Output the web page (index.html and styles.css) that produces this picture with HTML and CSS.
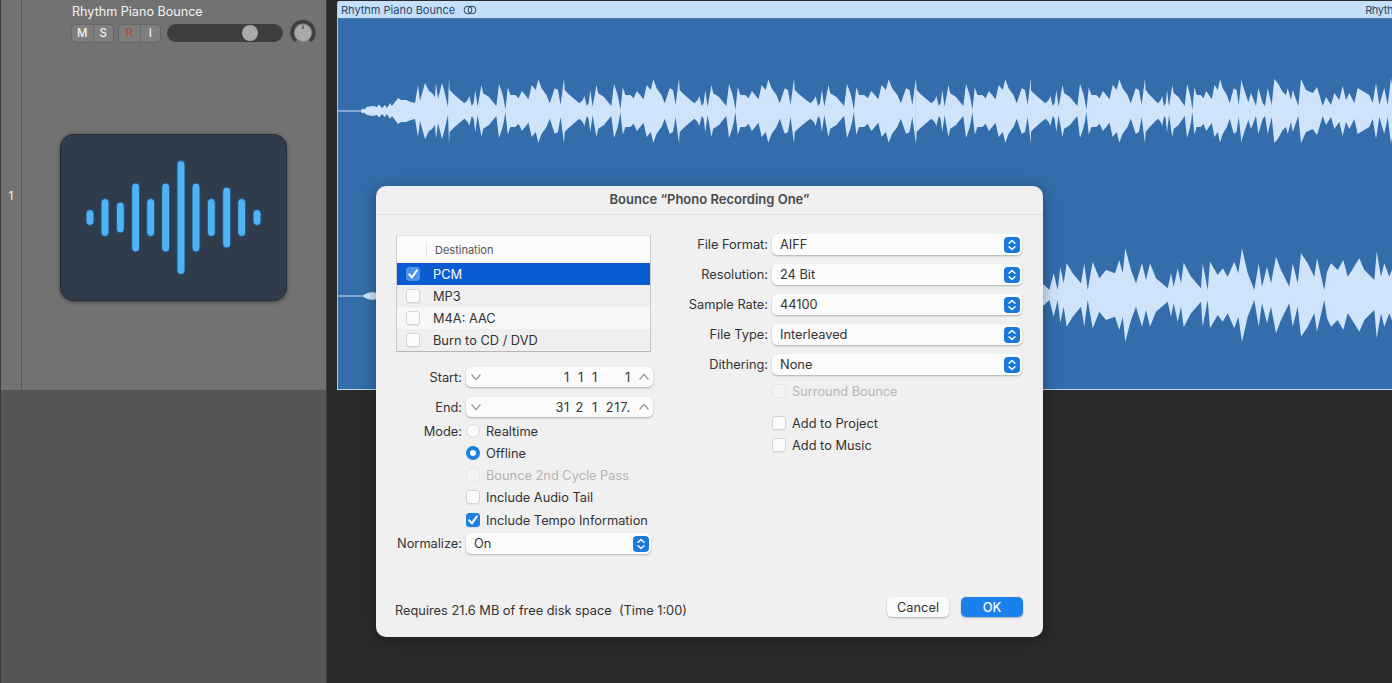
FILE: index.html
```html
<!DOCTYPE html>
<html lang="en">
<head>
<meta charset="utf-8">
<title>Bounce</title>
<link rel="stylesheet" href="styles.css">
</head>
<body>
<svg class="defs" width="0" height="0" aria-hidden="true">
  <defs>
    <g id="period">
      <path id="half" d="M0,0 L0,-32.7 L.7,-21 L4,-17.5 L8,-14 L12,-10.5 L15.5,-7.7 L18.7,-11 L20.4,-15 L22.7,-5 L24.6,-7.7 L26.3,-21 L28.6,-4.3 L32.5,-26 L34.2,-17.7 L37,-16 L40,-14 L44,-9 L47.3,-5 L50,-27 L53.2,-17.7 L55,-10 L56.4,-1 L58.8,-23.7 L61.4,-16 L66.3,-16 L69.6,-12.7 L72.9,-20 L76.2,-16 L79.5,-11.7 L82.7,-26 L86.7,-21 L89.3,-31.7 L92.6,-22.7 L97.5,-16 L100.8,-7.7 L102.4,-12.7 L105.7,-22.7 L109,-21 L111.6,-6 L115,-32.7 L115,0 Z"/>
      <use href="#half" transform="scale(1,-1)"/>
    </g>
    <g id="tail">
      <path id="tail-half" d="M0,0 L0,-31 L7.3,-9 L10,-18 L15,-5 L17.3,-23 L21.7,-8 L24,-5 L26.7,-23 L30.7,-6 L33.3,-32 L36.7,-28 L41.7,-19 L45,-16 L46.7,-23 L50,-11 L51.7,-21 L57.3,-5 L60,-32 L65,-21 L71.7,-18 L76,-24 L81.7,-5 L85,-14 L90,-6 L93.3,-18 L98.3,-11 L101.7,-25 L105,-11 L108.3,-18 L113.3,-8 L116.7,-23 L123.3,-19 L128.3,-16 L131.7,-8 L135,-28 L138.3,-6 L143.3,-23 L146.7,-6 L150,-33 L152,-20 L152,0 Z"/>
      <use href="#tail-half" transform="scale(1,-1)"/>
    </g>
    <g id="lower">
      <path id="lower-half" d="M10,0 L10,-12 L13.3,-10 L18.3,-5 L22.7,-21.7 L26.7,-5 L29.3,-27.7 L32.7,-11.7 L35.7,-31.7 L41.7,-21.7 L50,-11.7 L53.3,-31.7 L56.7,-5 L61.7,-33.3 L68.3,-16.7 L75,-25 L80,-23.3 L84,-21.7 L88.3,-35 L91.7,-21.7 L94.3,-46.7 L100,-25 L105,-11.7 L111,-31.7 L115,-15 L119,-31.7 L125,-16.7 L136.7,-6.7 L140,-21.7 L142.7,-8.3 L146.7,-26.7 L150,-11.7 L152.7,-32.3 L160,-18.3 L170,-6.7 L171.7,-31.7 L176.7,-5 L179,-33.3 L186.7,-20 L191.7,-26.7 L196.7,-18.3 L203.3,-33.3 L207.3,-21.7 L211,-46.7 L216.7,-21.7 L223.3,-5 L227.7,-31.7 L231,-8.3 L236,-28.3 L240,-11.7 L245,-38.3 L250,-25 L258.3,-8.3 L261.7,-31.7 L266.7,-11.7 L270,-41.7 L276.7,-31.7 L283.3,-18.3 L286,-36.7 L293.3,-5 L296,-23.3 L300,-31.7 L306.7,-25 L312.3,-35 L316.7,-18.3 L320,-23.3 L328.3,-36.7 L333.3,-25 L343.3,-15 L345.7,-43.3 L350,-18.3 L353.3,-31.7 L358.3,-18.3 L362,-28.3 L362,0 Z"/>
      <use href="#lower-half" transform="scale(1,-1)"/>
    </g>
    <symbol id="updown" viewBox="0 0 16 16">
      <path d="M5 6.2 8 3.4l3 2.8M5 9.8l3 2.8 3-2.8" fill="none" stroke="#fff" stroke-width="1.4" stroke-linecap="round" stroke-linejoin="round"/>
    </symbol>
    <symbol id="tick" viewBox="0 0 14 14">
      <path d="M3.2 7.4 5.9 10.4 10.9 3.4" fill="none" stroke="#fff" stroke-width="2" stroke-linecap="round" stroke-linejoin="round"/>
    </symbol>
    <symbol id="chev-down" viewBox="0 0 12 8">
      <path d="M1.5 1.5 6 6.5l4.500-5" fill="none" stroke="#9a9a9a" stroke-width="1.2"/>
    </symbol>
    <symbol id="chev-up" viewBox="0 0 12 8">
      <path d="M1.5 6.5 6 1.5l4.500 5" fill="none" stroke="#9a9a9a" stroke-width="1.2"/>
    </symbol>
  </defs>
</svg>

<div class="app">
  <div class="top">
    <aside class="header">
      <div class="track-num">1</div>
      <div class="track">
        <div class="track-name">Rhythm Piano Bounce</div>
        <div class="track-controls">
          <div class="btn-group"><span class="tbtn">M</span><span class="tbtn">S</span></div>
          <div class="btn-group"><span class="tbtn rec">R</span><span class="tbtn">I</span></div>
          <div class="fader"><span class="fader-thumb"></span></div>
          <svg class="knob" width="26" height="26" viewBox="0 0 26 26">
            <path d="M6 21a11 11 0 1 1 14 0" fill="none" stroke="#3f3f3f" stroke-width="3.4"/>
            <circle cx="13" cy="13" r="8.4" fill="#a9a9a9"/>
            <path d="M13 5.5v3.5" stroke="#444" stroke-width="1.2"/>
          </svg>
        </div>
        <svg class="logo" width="227" height="167" viewBox="0 0 227 167">
          <rect x=".5" y=".5" width="226" height="166" rx="13" fill="#303b4b" stroke="#262c36"/>
          <g fill="#4fb3f3" stroke="#1d4f7c" stroke-width="1">
            <rect x="26" y="75.5" width="8" height="16" rx="4"/>
            <rect x="41" y="64.5" width="8" height="38" rx="4"/>
            <rect x="56.300" y="68" width="8" height="31" rx="4"/>
            <rect x="71.700" y="49" width="8" height="69" rx="4"/>
            <rect x="86.700" y="64.5" width="8" height="38" rx="4"/>
            <rect x="101.700" y="49" width="8" height="69" rx="4"/>
            <rect x="117" y="26.500" width="8" height="114" rx="4"/>
            <rect x="132" y="49" width="8" height="69" rx="4"/>
            <rect x="147.300" y="64.5" width="8" height="38" rx="4"/>
            <rect x="162.700" y="53" width="8" height="61" rx="4"/>
            <rect x="177.700" y="64.5" width="8" height="38" rx="4"/>
            <rect x="193" y="75.5" width="8" height="16" rx="4"/>
          </g>
        </svg>
      </div>
    </aside>

    <section class="region">
      <div class="region-title">
        <span>Rhythm Piano Bounce</span>
        <svg class="loop" width="14" height="10" viewBox="0 0 14 10">
          <circle cx="5" cy="5" r="3.900" fill="none" stroke="#24466b" stroke-width="1"/>
          <circle cx="9" cy="5" r="3.900" fill="none" stroke="#24466b" stroke-width="1"/>
        </svg>
        <span class="region-title-next">Rhyth</span>
      </div>
      <svg class="wave" width="1055" height="370" viewBox="337 19 1055 370" fill="#cfe4fb">
        <path d="M337,110.400 L360,110.400 L361.500,108.500 L363,109.500 L366,107 L372,106 L376,107 L378,104.500 L381,108 L384,105 L386,108 L389,103 L391,106 L394,102 L397,98 L400,100 L405,100 L410,102 L414,103 L417,85 L419,101 L424,83 L428,91 L431,93 L434,97 L435,83 L437,99 L441,83 L443,90 L447,107 L448,78 L448,144 L447,115 L443,132 L441,139 L437,123 L435,139 L434,125 L431,129 L428,131 L424,139 L419,121 L417,137 L414,119 L410,120 L405,122 L400,122 L397,124 L394,120 L391,116 L389,119 L386,114 L384,117 L381,114 L378,117.500 L376,115 L372,116 L366,115 L363,112.500 L361.500,113.500 L360,111.600 L337,111.600 Z"/>
        <use href="#period" transform="translate(448,111)"/>
        <use href="#period" transform="translate(563,111)"/>
        <use href="#period" transform="translate(678,111)"/>
        <use href="#period" transform="translate(793,111) scale(1.06,1)"/>
        <use href="#period" transform="translate(915,111)"/>
        <use href="#period" transform="translate(1029,111)"/>
        <use href="#period" transform="translate(1144,111) scale(.84,1)"/>
        <use href="#tail" transform="translate(1240,111)"/>
        <path d="M337,295.400 L362,295.400 L366,293 L372,292 L376,293 L376,299 L372,300 L366,299 L362,296.600 L337,296.600 Z"/>
        <use href="#lower" transform="translate(1030,295)"/>
      </svg>
    </section>
  </div>

  <div class="bottom">
    <div class="bottom-left"></div>
    <div class="bottom-right"></div>
  </div>

  <div class="dialog">
    <h1 class="dialog-title">Bounce “Phono Recording One”</h1>
    <div class="dialog-body">
      <div class="col-left">
        <div class="dest">
          <div class="dest-head"><span class="dest-head-check"></span><span>Destination</span></div>
          <div class="dest-row selected"><span class="box on"><svg width="14" height="14"><use href="#tick"/></svg></span>PCM</div>
          <div class="dest-row alt"><span class="box"></span>MP3</div>
          <div class="dest-row"><span class="box"></span>M4A: AAC</div>
          <div class="dest-row alt"><span class="box"></span>Burn to CD / DVD</div>
        </div>
        <div class="form">
          <label class="lbl">Start:</label>
          <div class="locator">
            <svg width="12" height="8"><use href="#chev-down"/></svg>
            <div class="loc-values"><span class="v1">1</span><span class="v2">1</span><span class="v3">1</span><span class="v4">1</span></div>
            <svg width="12" height="8"><use href="#chev-up"/></svg>
          </div>
          <label class="lbl lbl-end">End:</label>
          <div class="locator loc-end">
            <svg width="12" height="8"><use href="#chev-down"/></svg>
            <div class="loc-values"><span class="v1">31</span><span class="v2">2</span><span class="v3">1</span><span class="v4">217.</span></div>
            <svg width="12" height="8"><use href="#chev-up"/></svg>
          </div>
          <label class="lbl lbl-mode">Mode:</label>
          <div class="opt opt-mode"><span class="radio"></span>Realtime</div>
          <div class="opt col2"><span class="radio on"></span>Offline</div>
          <div class="opt col2 off"><span class="box dim"></span>Bounce 2nd Cycle Pass</div>
          <div class="opt col2"><span class="box"></span>Include Audio Tail</div>
          <div class="opt col2 opt-tempo"><span class="box on"><svg width="14" height="14"><use href="#tick"/></svg></span>Include Tempo Information</div>
          <label class="lbl">Normalize:</label>
          <div class="select sel-narrow">On<svg class="stepper" width="16" height="16"><use href="#updown"/></svg></div>
        </div>
      </div>
      <div class="col-right">
        <div class="rform">
          <label class="lbl">File Format:</label>
          <div class="select">AIFF<svg class="stepper" width="16" height="16"><use href="#updown"/></svg></div>
          <label class="lbl">Resolution:</label>
          <div class="select">24 Bit<svg class="stepper" width="16" height="16"><use href="#updown"/></svg></div>
          <label class="lbl">Sample Rate:</label>
          <div class="select">44100<svg class="stepper" width="16" height="16"><use href="#updown"/></svg></div>
          <label class="lbl">File Type:</label>
          <div class="select">Interleaved<svg class="stepper" width="16" height="16"><use href="#updown"/></svg></div>
          <label class="lbl">Dithering:</label>
          <div class="select">None<svg class="stepper" width="16" height="16"><use href="#updown"/></svg></div>
        </div>
        <div class="extras">
          <div class="opt off"><span class="box dim"></span>Surround Bounce</div>
          <div class="opt opt-project"><span class="box"></span>Add to Project</div>
          <div class="opt"><span class="box"></span>Add to Music</div>
        </div>
      </div>
    </div>
    <div class="dialog-foot">
      <span class="req">Requires 21.6 MB of free disk space&nbsp; (Time 1:00)</span>
      <button class="btn">Cancel</button>
      <button class="btn primary">OK</button>
    </div>
  </div>
</div>
</body>
</html>
```

FILE: styles.css
```css
* { box-sizing: border-box; }
html, body { margin: 0; padding: 0; }
body {
  width: 1392px;
  height: 683px;
  overflow: hidden;
  background: #2a2a2a;
  font-family: Inter, "Liberation Sans", sans-serif;
  font-size: 12.8px;
  color: #333;
}
.defs { display: block; height: 0; }
.app { position: relative; width: 1392px; height: 683px; display: flex; flex-direction: column; }

.top { height: 390px; display: flex; }
.header {
  width: 327px;
  display: flex;
  background: #727272;
  border-right: 1px solid #3a3a3a;
  border-left: 1px solid #3c3c3c;
}
.track-num {
  width: 21px;
  flex: none;
  border-right: 1px solid #555;
  display: flex;
  align-items: center;
  justify-content: center;
  color: #eee;
  font-size: 12px;
}
.track { flex: 1; padding: 4px 0 0 50px; min-width: 0; }
.track-name { color: #f2f2f2; font-size: 12.6px; line-height: 15px; white-space: nowrap; }
.track-controls { display: flex; align-items: center; margin-top: 5px; height: 18px; }
.btn-group { display: flex; height: 17px; border-radius: 4px; background: #7e7e7e; box-shadow: 0 0 0 1px #666; margin-right: 6px; }
.tbtn { width: 20.500px; font-size: 11.5px; font-weight: 500; line-height: 17px; text-align: center; color: #f0f0f0; }
.tbtn + .tbtn { border-left: 1px solid #6a6a6a; }
.tbtn.rec { color: #b8473d; }
.fader { width: 116px; height: 18px; margin-left: 1px; border-radius: 9px; background: #3e3e3e; display: flex; align-items: center; padding-left: 75px; }
.fader-thumb { width: 16px; height: 16px; border-radius: 50%; background: #ababab; }
.knob { margin-left: 7px; flex: none; }
.logo { display: block; margin: 92px 0 0 -12px; filter: drop-shadow(0 1px 2px rgba(0,0,0,.45)); }

.region { flex: 1; min-width: 0; margin: 1px 0 0 10px; height: 389px; background: #336dab; border-left: 1px solid #a9c8e6; border-bottom: 1px solid #b9d4ec; overflow: hidden; border-top-left-radius: 2px; }
.region-title { height: 18px; display: flex; align-items: center; padding-left: 3px; background: #c4e0f9; border-bottom: 1px solid #4d7aa5; color: #28476b; font-size: 11px; white-space: nowrap; }
.loop { margin-left: 8px; flex: none; }
.region-title-next { margin-left: 888px; letter-spacing: -.4px; }
.wave { display: block; }

.bottom { flex: 1; display: flex; }
.bottom-left { width: 327px; background: #565656; border-right: 1px solid #3a3a3a; border-left: 1px solid #3c3c3c; }
.bottom-right { flex: 1; background: #2b2b2b; }

.dialog {
  position: absolute;
  left: 376px;
  top: 186px;
  width: 667px;
  height: 451px;
  background: #f0f0f0;
  border-radius: 10px;
  box-shadow: 0 3px 16px rgba(0,0,0,.35);
  display: flex;
  flex-direction: column;
}
.dialog-title { margin: 0; height: 29px; flex: none; border-bottom: 1px solid #dedede; font-size: 13px; font-weight: 600; line-height: 27px; text-align: center; color: #4a4a4a; }
.dialog-body { display: flex; flex: 1; padding: 20px 20px 0 20px; min-height: 0; }
.col-left { width: 257px; flex: none; }
.col-right { flex: 1; min-width: 0; }

.dest { width: 255px; height: 117px; border: 1px solid #c9c9c9; border-top-color: #e2e2e2; border-bottom-color: #b5b5b5; background: #f7f7f7; }
.dest-head { height: 27px; background: #fbfbfb; display: flex; align-items: center; font-size: 11px; color: #555; }
.dest-head-check { width: 30px; height: 16px; border-right: 1px solid #e2e2e2; margin-right: 8px; }
.dest-row { height: 22px; display: flex; align-items: center; color: #333; padding-left: 9px; }
.dest-row .box { margin-right: 13px; }
.dest-row.alt { background: #efefef; }
.dest-row.selected { background: #0a5cd2; color: #fff; }

.box { width: 14px; height: 14px; flex: none; border-radius: 3px; background: #fbfbfb; border: 1px solid #d4d4d4; box-shadow: 0 1px 1px rgba(0,0,0,.06); display: inline-flex; }
.box.on { background: #1d7fe0; border-color: #1d7fe0; }
.box.on svg { margin: -1px; }
.box.dim { background: #f3f3f3; border-color: #e6e6e6; box-shadow: none; }
.dest-row.selected .box.on { background: #4a93e8; border-color: #4a93e8; }
.radio { width: 14px; height: 14px; flex: none; border-radius: 50%; background: #fbfbfb; border: 1px solid #d8d8d8; }
.radio.on { background: #fff; border: 4px solid #1d7fe0; }

.form { display: grid; grid-template-columns: 66px 187px; column-gap: 4px; margin-top: 15px; align-items: center; }
.rform { display: grid; grid-template-columns: 92px 250px; column-gap: 4px; row-gap: 9px; align-items: center; margin-top: -1px; width: 346px; margin-left: 23px; }
.lbl { text-align: right; white-space: nowrap; color: #333; }
.lbl-end { margin-top: 10px; }
.lbl-mode { margin-top: 3px; }
.locator { height: 20px; display: flex; align-items: center; justify-content: space-between; padding: 0 3px 0 4px; background: #fbfbfb; border-radius: 5px; box-shadow: 0 1px 2px rgba(0,0,0,.28); }
.loc-end { margin-top: 10px; }
.loc-values { flex: 1; display: flex; justify-content: flex-end; padding-right: 7px; letter-spacing: .7px; }
.loc-values span { text-align: right; }
.v1 { width: 18px; }
.v2 { width: 14px; }
.v3 { width: 14px; }
.v4 { width: 33px; }
.opt { height: 22px; display: flex; align-items: center; gap: 6px; white-space: nowrap; color: #333; }
.opt.off { color: #b4b4b4; }
.col2 { grid-column: 2; }
.opt-mode { margin-top: 3px; }
.opt-tempo { margin-top: 1px; margin-bottom: 2px; }
.select { height: 21px; display: flex; align-items: center; justify-content: space-between; padding: 0 2px 0 8px; background: #fbfbfb; border-radius: 5px; box-shadow: 0 1px 2px rgba(0,0,0,.28); color: #333; }
.sel-narrow { margin-right: 2px; }
.stepper { background: #1a79d8; border-radius: 4px; flex: none; }
.extras { margin-left: 119px; margin-top: 5px; }
.extras .opt { gap: 6px; }
.opt-project { margin-top: 10px; }

.dialog-foot { display: flex; align-items: center; flex: none; padding: 0 20px 20px 19px; }
.req { flex: 1; color: #333; line-height: 16px; align-self: flex-end; margin-bottom: -2px; }
.btn { font: inherit; height: 20px; width: 62px; padding: 0; border: 0; border-radius: 5px; background: #fbfbfb; color: #333; box-shadow: 0 1px 2px rgba(0,0,0,.28); }
.btn.primary { background: #1a80ee; color: #fff; margin-left: 12px; font-weight: 500; }
```
